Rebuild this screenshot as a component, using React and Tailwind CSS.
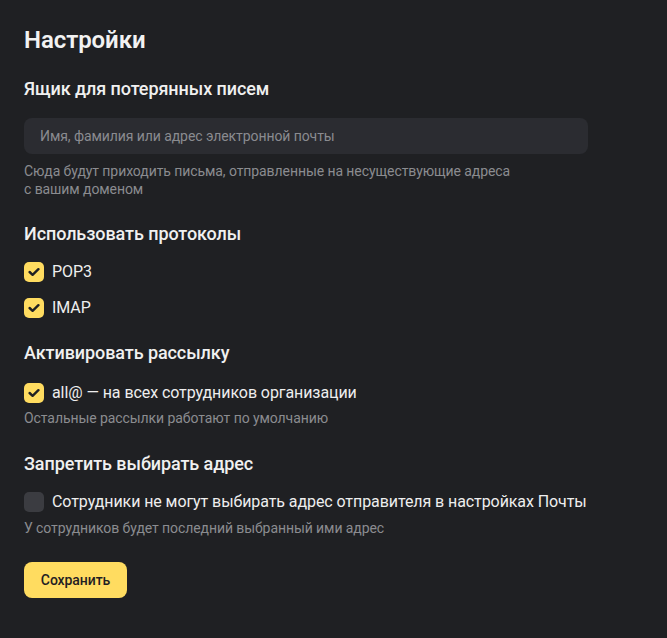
import React, { useState } from "react";

const Check = ({ checked, onChange, label }) => (
  <label className="flex items-center gap-2 cursor-pointer">
    <span
      onClick={onChange}
      className={
        "flex items-center justify-center w-5 h-5 rounded-[5px] shrink-0 " +
        (checked ? "bg-[#ffdc60]" : "bg-[#3b3c41]")
      }
    >
      {checked && (
        <svg width="12" height="10" viewBox="0 0 12 10" fill="none">
          <path
            d="M1.6 5L4.6 7.8L10.4 2.2"
            stroke="#1f2023"
            strokeWidth="2.4"
            strokeLinecap="round"
            strokeLinejoin="round"
          />
        </svg>
      )}
    </span>
    <span className="text-[16px] leading-5 text-[#eeeeee]">{label}</span>
  </label>
);

const App = () => {
  const [pop3, setPop3] = useState(true);
  const [imap, setImap] = useState(true);
  const [all, setAll] = useState(true);
  const [deny, setDeny] = useState(false);

  return (
    <div className="min-h-[638px] bg-[#1f2023] px-6 pt-6 pb-10 font-['Roboto',sans-serif] tracking-[-0.005em]">
      <h1 className="text-[24px] leading-8 font-semibold text-[#f2f2f2]">
        Настройки
      </h1>

      <h2 className="mt-[21px] text-[18px] leading-6 font-medium text-[#f0f0f0]">
        Ящик для потерянных писем
      </h2>
      <input
        placeholder="Имя, фамилия или адрес электронной почты"
        className="mt-[17px] w-[564px] h-9 rounded-lg bg-[#2b2c31] px-4 text-[14px] text-[#eeeeee] placeholder:text-[#8a8b90] outline-none"
      />
      <p className="mt-2 text-[14px] leading-[18px] text-[#8b8c90]">
        Сюда будут приходить письма, отправленные на несуществующие адреса
        <br />с вашим доменом
      </p>

      <h2 className="mt-6 text-[18px] leading-6 font-medium text-[#f0f0f0]">
        Использовать протоколы
      </h2>
      <div className="mt-4 flex flex-col gap-4">
        <Check checked={pop3} onChange={() => setPop3(!pop3)} label="POP3" />
        <Check checked={imap} onChange={() => setImap(!imap)} label="IMAP" />
      </div>

      <h2 className="mt-[23px] text-[18px] leading-6 font-medium text-[#f0f0f0]">
        Активировать рассылку
      </h2>
      <div className="mt-[18px]">
        <Check
          checked={all}
          onChange={() => setAll(!all)}
          label="all@ — на всех сотрудников организации"
        />
      </div>
      <p className="mt-1.5 text-[14px] leading-[18px] text-[#8b8c90]">
        Остальные рассылки работают по умолчанию
      </p>

      <h2 className="mt-[25px] text-[18px] leading-6 font-medium text-[#f0f0f0]">
        Запретить выбирать адрес
      </h2>
      <div className="mt-4">
        <Check
          checked={deny}
          onChange={() => setDeny(!deny)}
          label="Сотрудники не могут выбирать адрес отправителя в настройках Почты"
        />
      </div>
      <p className="mt-[7px] text-[14px] leading-[18px] text-[#8b8c90]">
        У сотрудников будет последний выбранный ими адрес
      </p>

      <button
        type="button"
        className="mt-[25px] h-9 w-[103px] rounded-lg bg-[#ffdc60] text-[14px] font-medium text-[#1f2023]"
      >
        Сохранить
      </button>
    </div>
  );
};

export default App;
